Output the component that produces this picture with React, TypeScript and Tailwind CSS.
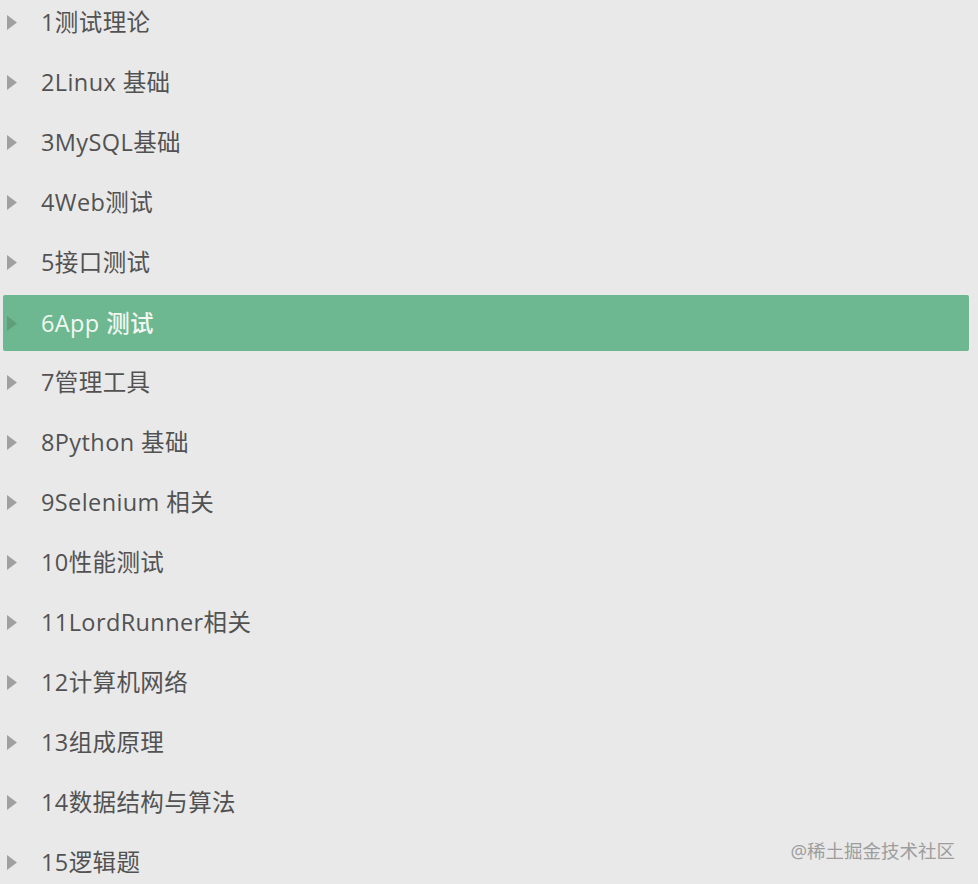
import React from "react";

const items = [
  "1测试理论",
  "2Linux 基础",
  "3MySQL基础",
  "4Web测试",
  "5接口测试",
  "6App 测试",
  "7管理工具",
  "8Python 基础",
  "9Selenium 相关",
  "10性能测试",
  "11LordRunner相关",
  "12计算机网络",
  "13组成原理",
  "14数据结构与算法",
  "15逻辑题",
];

const Arrow = ({ active }: { active: boolean }) => (
  <svg width="10" height="15" viewBox="0 0 10 15" className="shrink-0">
    <path d="M0 0 L10 7.5 L0 15 Z" fill={active ? "#5f9d7b" : "#a0a0a0"} />
  </svg>
);

export default function App() {
  return (
    <div
      className="relative w-[978px] h-[884px] overflow-hidden bg-[#e9e9e9]"
      style={{ fontFamily: '"Open Sans", "Noto Sans CJK SC", sans-serif' }}
    >
      <ul className="-mt-[8px] flex flex-col">
        {items.map((item, i) => {
          const active = i === 5;
          return (
            <li key={item} className="h-[60px] flex">
              <div
                className={
                  active
                    ? "mt-[3px] mb-[1px] ml-[3px] w-[966px] flex items-center bg-[#6db890] rounded-[2px]"
                    : "flex items-center w-full"
                }
              >
                <div className={active ? "pl-[4px] pr-[24px] flex" : "pl-[7px] pr-[24px] flex"}>
                  <Arrow active={active} />
                </div>
                <span
                  className={
                    active
                      ? "pt-[2px] text-[23.5px] tracking-[0.4px] text-[#f2f7f2] leading-none font-medium"
                      : "pt-[2px] text-[23.5px] tracking-[0.4px] text-[#525252] leading-none"
                  }
                >
                  {item}
                </span>
              </div>
            </li>
          );
        })}
      </ul>
      <div className="absolute right-[23px] bottom-[24px] text-[18.5px] text-[#9d9d9d] leading-none">
        @稀土掘金技术社区
      </div>
    </div>
  );
}
